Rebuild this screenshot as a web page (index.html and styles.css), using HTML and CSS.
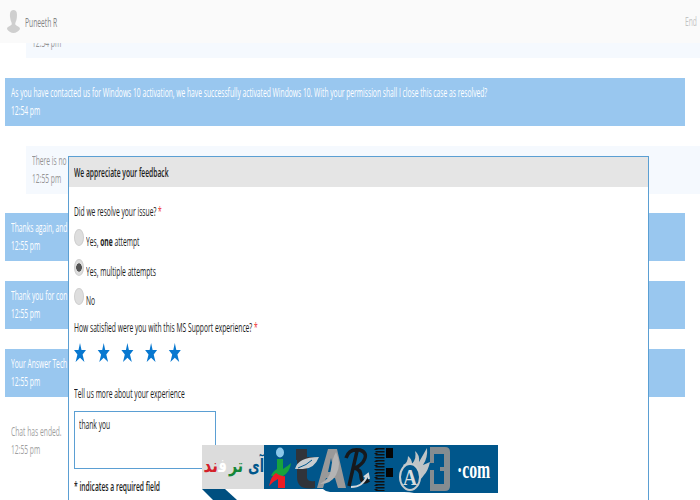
FILE: index.html
```
<!DOCTYPE html>
<html lang="en">
<head>
<meta charset="utf-8">
<title>Support chat</title>
<link rel="stylesheet" href="styles.css">
</head>
<body>
<header class="topbar">
  <svg class="avatar" width="13" height="24" viewBox="0 0 13 24"><path d="M6.500 0C2.800 0 2.700 4 3.200 8c.3 3 1.600 4 1.600 6C4.500 16 0 16 0 19c1 2 4 4 6.500 4S12 21 13 19c0-3-4.500-3-4.800-5 0-2 1.300-3 1.600-6 .5-4 .4-8-3.300-8Z" fill="#cfcfcf"/></svg>
  <span class="t name">Puneeth R</span>
  <span class="end"><span class="t">End</span></span>
</header>
<main class="chat">
  <div class="msg reply first"><p></p><p><span class="t">12:54 pm</span></p></div>
  <div class="msg agent"><p><span class="t">As you have contacted us for Windows 10 activation, we have successfully activated Windows 10. With your permission shall I close this case as resolved?</span></p><p><span class="t">12:54 pm</span></p></div>
  <div class="msg reply"><p><span class="t">There is no</span></p><p><span class="t">12:55 pm</span></p></div>
  <div class="msg agent"><p><span class="t">Thanks again, and</span></p><p><span class="t">12:55 pm</span></p></div>
  <div class="msg agent"><p><span class="t">Thank you for con</span></p><p><span class="t">12:55 pm</span></p></div>
  <div class="msg agent"><p><span class="t">Your Answer Tech</span></p><p><span class="t">12:55 pm</span></p></div>
  <div class="msg ended"><p><span class="t">Chat has ended.</span></p><p><span class="t">12:55 pm</span></p></div>
</main>
<section class="dialog">
  <h1><span class="t">We appreciate your feedback</span></h1>
  <form class="survey">
    <p class="question"><span class="t">Did we resolve your issue? <i>*</i></span></p>
    <div class="option"><b class="radio"></b><span class="t">Yes, <strong>one</strong> attempt</span></div>
    <div class="option"><b class="radio on"></b><span class="t">Yes, multiple attempts</span></div>
    <div class="option"><b class="radio"></b><span class="t">No</span></div>
    <p class="rating"><span class="t">How satisfied were you with this MS Support experience? <i>*</i></span></p>
    <svg class="stars" width="108" height="20" viewBox="0 0 108 20" fill="#0878d0"><defs><path id="star" d="M6 0 7.500 7H12L8.600 11.500 10.400 19 6 14.800 1.600 19 3.400 11.500 0 7H4.500Z"/></defs><use href="#star"/><use href="#star" x="23.700"/><use href="#star" x="47.400"/><use href="#star" x="71.100"/><use href="#star" x="94.800"/></svg>
    <p class="more"><span class="t">Tell us more about your experience</span></p>
    <div class="comment"><span class="t">thank you</span></div>
    <p class="required"><span class="t">* indicates a required field</span></p>
  </form>
</section>
<svg class="banner" width="296" height="55" viewBox="0 0 296 55">
  <path d="M0 44H23L35 55H11Z" fill="#004f80"/>
  <path d="M0 0H62V44H0Z" fill="#dcdcdc"/>
  <path d="M62 0H296V48H212Q208 47 202 47H128Q124 47 121 44H62Z" fill="#00568b"/>
  <g class="fa" direction="rtl">
    <text x="62" y="27" textLength="16" lengthAdjust="spacingAndGlyphs" fill="#00568b">آی</text>
    <text x="41" y="27" textLength="14" lengthAdjust="spacingAndGlyphs" fill="#168637">تر</text>
    <text x="0" y="27" transform="translate(25 0) scale(.7 1)" fill="#fff">ﻓ</text>
    <text x="0" y="27" transform="translate(16 0) scale(.8 1)" fill="#d4202a">ﻧﺪ</text>
  </g>
  <ellipse cx="78" cy="7.500" rx="4" ry="5" fill="#8cc8ea"/>
  <path d="M75 14H81V24Q86 21 89 18Q88 27 81 31L76 34Q71 30 69 31Q71 26 75 24Z" fill="#18a33c"/>
  <path d="M74 28Q79 32 83 31V43H76V34Q70 37 67 41Q69 31 74 28Z" fill="#ed1c24"/>
  <path d="M94 4H105V12H112V15H105V33Q106 37 113 36V43Q95 46 95 32V15H94Z" fill="#30343a"/>
  <path d="M93 24Q96 12 117 12Q112 25 99 24Q94 24 93 24Z" fill="#c7cccf"/><path d="M96 23Q105 20 110 15" fill="none" stroke="#00568b"/>
  <path d="M115 43 126 4H135L144 43H136L133 33H124L121 43ZM126 27H132L129 13Z" fill="#999"/>
  <path d="M118 39Q128 34 129 24T134 7Q140 19 134 30 129 39 118 39Z" fill="#b4b4b4"/>
  <path d="M144 13Q147 3 158 5Q167 8 161 17Q157 22 152 23Q159 24 159 32Q160 40 167 35M155 6 147 41" fill="none" stroke="#17191c" stroke-width="3.500"/>
  <path d="M149 42Q161 42 165 31M162 32 166 29 167 34" fill="none" stroke="#d2d7da" stroke-width="2"/>
  <path d="M178 3V46" stroke="#111" stroke-width="9" stroke-dasharray="1.500 1.500"/>
  <path d="M174 4V46" stroke="#111" stroke-width="3" stroke-dasharray="1 3"/>
  <path d="M184 3H191V13H184ZM184 23H191V32H184Z" fill="#050505"/>
  <path d="M201 20Q206 18 206 11Q210 14 210 19Q215 13 213 6Q218 10 217 17L225 3Q226 13 221 20L228 17Q226 26 222 30Q218 36 214 37Z" fill="#bfc4c6"/>
  <ellipse cx="208" cy="32" rx="10" ry="13" fill="#00568b" stroke="#c5cacc" stroke-width="2"/>
  <text class="mark" x="201" y="40" textLength="14" lengthAdjust="spacingAndGlyphs">A</text>
  <path d="M228 2H243Q248 2 248 7V41Q248 46 243 46H228V25H232V39H242V26H238V22H242V9H232V18H228Z" fill="#858c90"/>
  <text class="com" transform="translate(255 33) scale(.63 1)">·com</text>
</svg>
</body>
</html>
```
FILE: styles.css
```
* { box-sizing: border-box; }
html { overflow: hidden; }
body { margin: 0; width: 700px; height: 500px; overflow: hidden; background: #fff; font: 12.500px/18px "Open Sans", "Noto Sans", sans-serif; position: relative; }
p, h1 { margin: 0; height: 18px; }
.t { display: inline-block; white-space: nowrap; transform: scaleX(.537); transform-origin: left center; }
.topbar { position: relative; z-index: 1; height: 43px; background: #fafafa; display: flex; align-items: center; padding-left: 7px; color: #858585; }
.name { margin-left: 5px; padding-top: 2px; }
.end { position: absolute; left: 685px; top: 13px; width: 15px; color: #c4c4c4; }
.chat { margin-top: -32.600px; display: flex; flex-direction: column; gap: 19.700px; }
.msg { height: 48px; flex: none; padding: 6px 0 0 5.500px; white-space: nowrap; overflow: hidden; }
.agent { width: 680px; margin-left: 5px; background: #99c7ef; color: #fff; }
.reply { margin-left: 26px; background: #f5f9fe; color: #959595; }
.ended { margin-left: 5px; color: #9f9f9f; }
.dialog { position: absolute; left: 68px; top: 156px; width: 581px; height: 344px; overflow: hidden; border: 1px solid #5b9fd3; border-bottom: 0; background: #fff; color: #1c1c1c; }
.dialog h1 { height: 30px; padding: 7px 0 0 5px; background: #e5e5e5; font-size: 12.500px; line-height: 18px; font-weight: 600; }
.survey { padding: 16px 0 0 5px; }
.survey i { color: #e33; font-style: normal; }
.survey .question { height: 25px; }
.option { height: 29.500px; display: flex; align-items: flex-start; gap: 1.500px; }
.option .t { margin-top: 5px; }
.radio { width: 10px; height: 17px; margin-top: 1px; border: 1px solid #cfcfcf; border-radius: 50%; background: #dedede; }
.radio.on { background: radial-gradient(ellipse 3px 4.500px, #555 85%, #dedede 100%); }
.rating { margin-top: 2px; }
.stars { display: block; margin-top: 6px; }
.more { margin-top: 22px; }
.comment { width: 142px; height: 58px; margin-top: 8px; padding: 4px 3.500px; border: 1px solid #5b9fd3; }
.required { margin-top: 9px; font-weight: 600; }
.banner { position: absolute; left: 202px; top: 445px; }
.fa { font: bold 19px "DejaVu Sans", sans-serif; }
.mark { font: bold 23px "Liberation Serif", serif; fill: #d7dcde; }
.com { font: bold 25px "Liberation Serif", serif; fill: #fff; }
```
